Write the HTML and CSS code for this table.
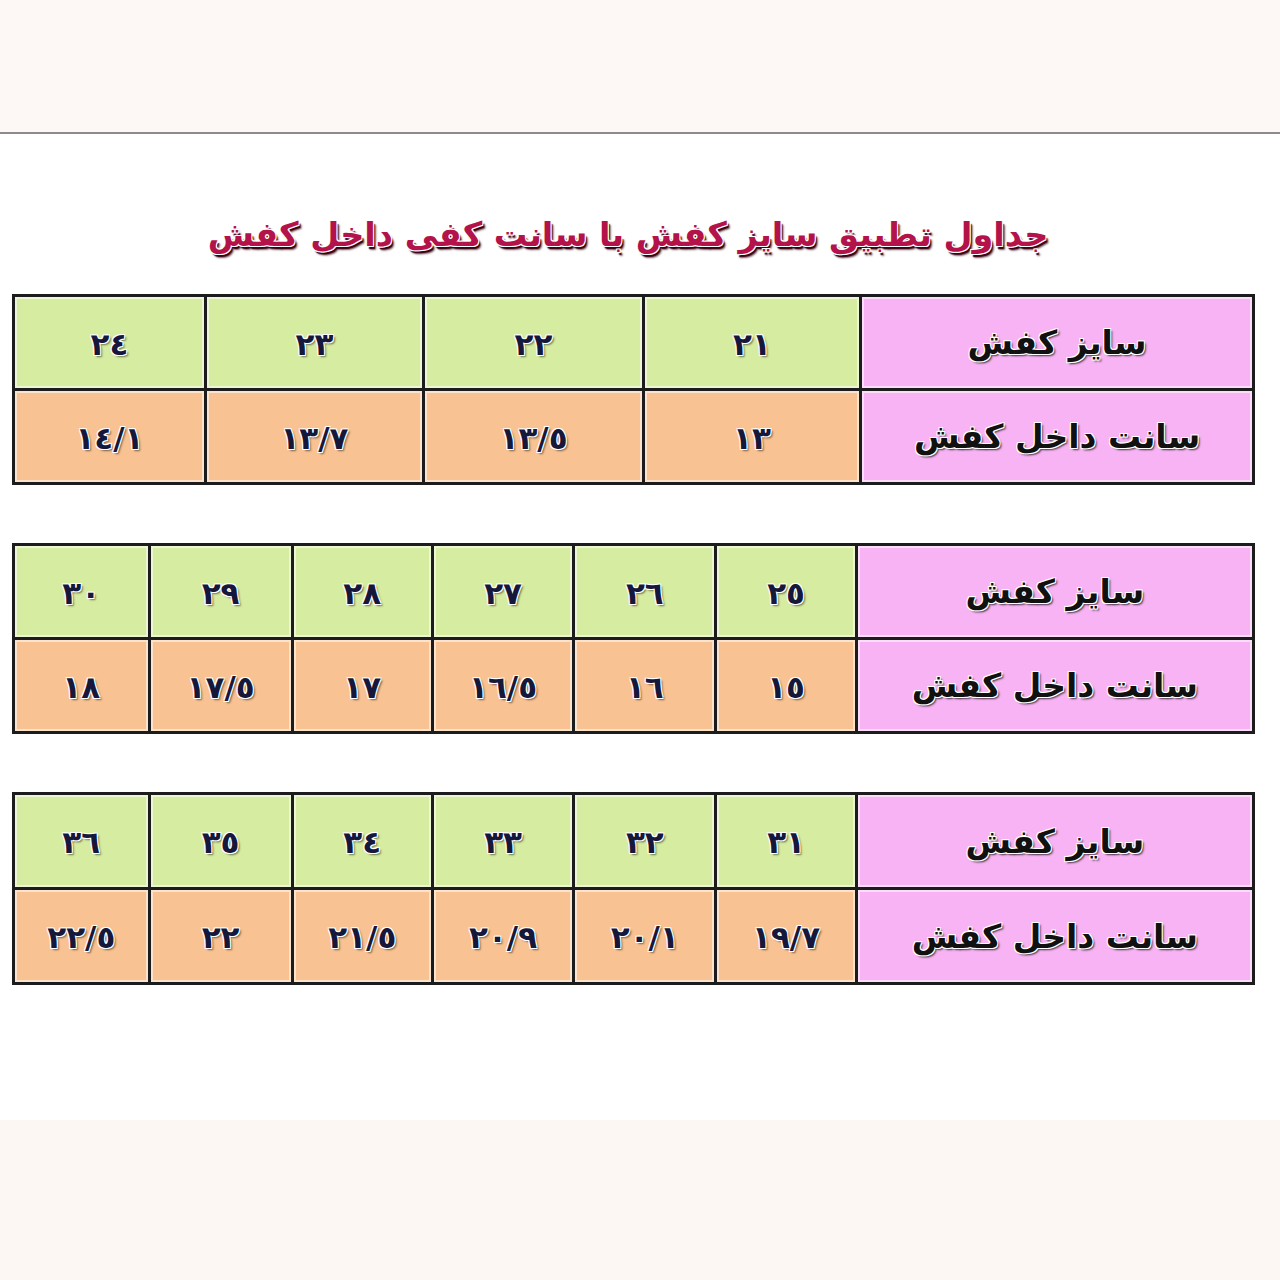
FILE: index.html
```html
<!DOCTYPE html>
<html lang="fa">
<head>
<meta charset="utf-8">
<title>جداول تطبیق سایز کفش</title>
<link rel="stylesheet" href="styles.css">
</head>
<body>
<div class="topband"></div>
<main class="sheet">
  <h1 class="title" dir="rtl">جداول تطبیق سایز کفش با سانت کفی داخل کفش</h1>

  <table class="size-table t4" dir="rtl">
    <tr class="row-size">
      <th>سایز کفش</th>
      <td>٢١</td><td>٢٢</td><td>٢٣</td><td>٢٤</td>
    </tr>
    <tr class="row-cm">
      <th>سانت داخل کفش</th>
      <td>١٣</td><td>١٣/٥</td><td>١٣/٧</td><td>١٤/١</td>
    </tr>
  </table>

  <table class="size-table t6" dir="rtl">
    <tr class="row-size">
      <th>سایز کفش</th>
      <td>٢٥</td><td>٢٦</td><td>٢٧</td><td>٢٨</td><td>٢٩</td><td>٣٠</td>
    </tr>
    <tr class="row-cm">
      <th>سانت داخل کفش</th>
      <td>١٥</td><td>١٦</td><td>١٦/٥</td><td>١٧</td><td>١٧/٥</td><td>١٨</td>
    </tr>
  </table>

  <table class="size-table t6 last" dir="rtl">
    <tr class="row-size">
      <th>سایز کفش</th>
      <td>٣١</td><td>٣٢</td><td>٣٣</td><td>٣٤</td><td>٣٥</td><td>٣٦</td>
    </tr>
    <tr class="row-cm">
      <th>سانت داخل کفش</th>
      <td>١٩/٧</td><td>٢٠/١</td><td>٢٠/٩</td><td>٢١/٥</td><td>٢٢</td><td>٢٢/٥</td>
    </tr>
  </table>
</main>
<div class="bottomband"></div>
</body>
</html>
```

FILE: styles.css
```css
html, body {
  margin: 0;
  padding: 0;
  background: #ffffff;
}

body {
  width: 1280px;
  font-family: "DejaVu Sans", "Noto Sans", sans-serif;
}

.topband {
  height: 132px;
  background: #fdf8f6;
  border-bottom: 2px solid #8e898b;
  box-shadow: 0 3px 5px rgba(0, 0, 0, 0.05);
}

.sheet {
  height: 986px;
  box-sizing: border-box;
  padding: 71px 0 0 12px;
  background: #ffffff;
}

.title {
  margin: 0;
  width: 1232px;
  height: 60px;
  line-height: 60px;
  text-align: center;
  font-size: 33.5px;
  font-weight: bold;
  color: #b3124a;
  text-shadow:
    1px 1px 0 #fff, -1px -1px 0 #fff, 1px -1px 0 #fff, -1px 1px 0 #fff,
    2px 3px 1px #3a0014, 3px 4px 2px rgba(40, 0, 10, 0.6);
}

.size-table {
  width: 1243px;
  table-layout: fixed;
  border-collapse: collapse;
  margin-top: 29px;
}

.size-table + .size-table {
  margin-top: 58px;
}

.size-table.last {
  margin-top: 58px;
}

.size-table th,
.size-table td {
  border: 3px solid #1c1c1c;
  padding: 0;
  text-align: center;
  vertical-align: middle;
  font-weight: bold;
  box-shadow: inset 0 0 0 2px rgba(255, 255, 255, 0.55);
}

.size-table th {
  background: #f7b3f3;
  color: #111111;
  font-size: 33px;
  text-shadow:
    1px 1px 0 #fff, -1px -1px 0 #fff, 1px -1px 0 #fff, -1px 1px 0 #fff,
    2px 2px 2px rgba(0, 0, 0, 0.7);
}

.size-table td {
  color: #15183a;
  font-size: 31px;
  letter-spacing: 3px;
  padding-top: 2px;
  text-shadow:
    1px 1px 0 #fff, -1px -1px 0 #fff, 1px -1px 0 #fff, -1px 1px 0 #fff,
    2px 2px 2px rgba(0, 0, 0, 0.5);
}

.row-size td {
  background: #d6eca1;
}

.row-cm td {
  background: #f8c293;
}

.t4 th { width: 31.45%; }
.t4 td:nth-of-type(1) { width: 17.26%; }
.t4 td:nth-of-type(2) { width: 17.5%; }
.t4 td:nth-of-type(3) { width: 17.34%; }

.t6 th { width: 31.8%; }
.t6 td:nth-of-type(1) { width: 11.07%; }
.t6 td:nth-of-type(2) { width: 11.23%; }
.t6 td:nth-of-type(3) { width: 11.15%; }
.t6 td:nth-of-type(4) { width: 11.07%; }
.t6 td:nth-of-type(5) { width: 11.3%; }

.t4 tr { height: 94px; }
.t6 tr { height: 94px; }
.t6.last tr { height: 95px; }

.bottomband {
  height: 160px;
  background: #fcf7f3;
}
```
